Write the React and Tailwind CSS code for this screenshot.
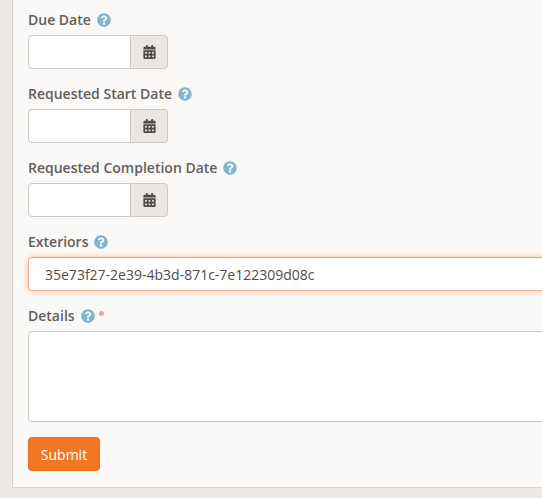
import { FaCalendarAlt, FaQuestionCircle } from 'react-icons/fa';

function FieldLabel({ children, required }) {
  return (
    <div className="flex items-center h-[20px] mb-[5px] text-[14px] font-semibold leading-[20px] text-[#625f5c]">
      <span>{children}</span>
      <FaQuestionCircle className="ml-[6px] w-[14px] h-[14px] text-[#7fb6d1]" />
      {required && <span className="ml-[4px] mb-[6px] w-[5px] h-[5px] rounded-full bg-[#f0a3a3]" />}
    </div>
  );
}

function DateField({ label }) {
  return (
    <div className="mb-[15px]">
      <FieldLabel>{label}</FieldLabel>
      <div className="flex h-[34px] w-[140px]">
        <input className="w-[103px] h-full bg-white border border-[#ccc9c5] rounded-l-[4px] outline-none" />
        <div className="flex-1 flex items-center justify-center bg-[#eae7e2] border border-l-0 border-[#ccc9c5] rounded-r-[4px]">
          <FaCalendarAlt className="w-[13px] h-[14px] text-[#4f4c4a]" />
        </div>
      </div>
    </div>
  );
}

export default function App() {
  return (
    <div className="h-[498px] overflow-hidden bg-[#edeae5] pl-[12px] font-['Open_Sans',sans-serif]">
      <div className="w-[600px] h-[488px] pl-[15px] pt-[10px] bg-[#fbf9f7] border-l border-b border-[#d8d5cf]">
        <DateField label="Due Date" />
        <DateField label="Requested Start Date" />
        <DateField label="Requested Completion Date" />

        <div className="mb-[15px]">
          <FieldLabel>Exteriors</FieldLabel>
          <input
            readOnly
            value="35e73f27-2e39-4b3d-871c-7e122309d08c"
            className="block w-[560px] h-[34px] pl-[16px] bg-white border border-[#f1a97a] rounded-[4px] shadow-[0_0_6px_rgba(243,120,36,0.45)] outline-none text-[14px] text-[#4f4c4a]"
          />
        </div>

        <div className="mb-[15px]">
          <FieldLabel required>Details</FieldLabel>
          <textarea className="block w-[560px] h-[91px] bg-white border border-[#ccc9c5] rounded-[4px] outline-none resize-none" />
        </div>

        <button className="w-[72px] h-[34px] bg-[#f17724] border border-[#e8701f] rounded-[4px] text-[14px] text-white">
          Submit
        </button>
      </div>
    </div>
  );
}
